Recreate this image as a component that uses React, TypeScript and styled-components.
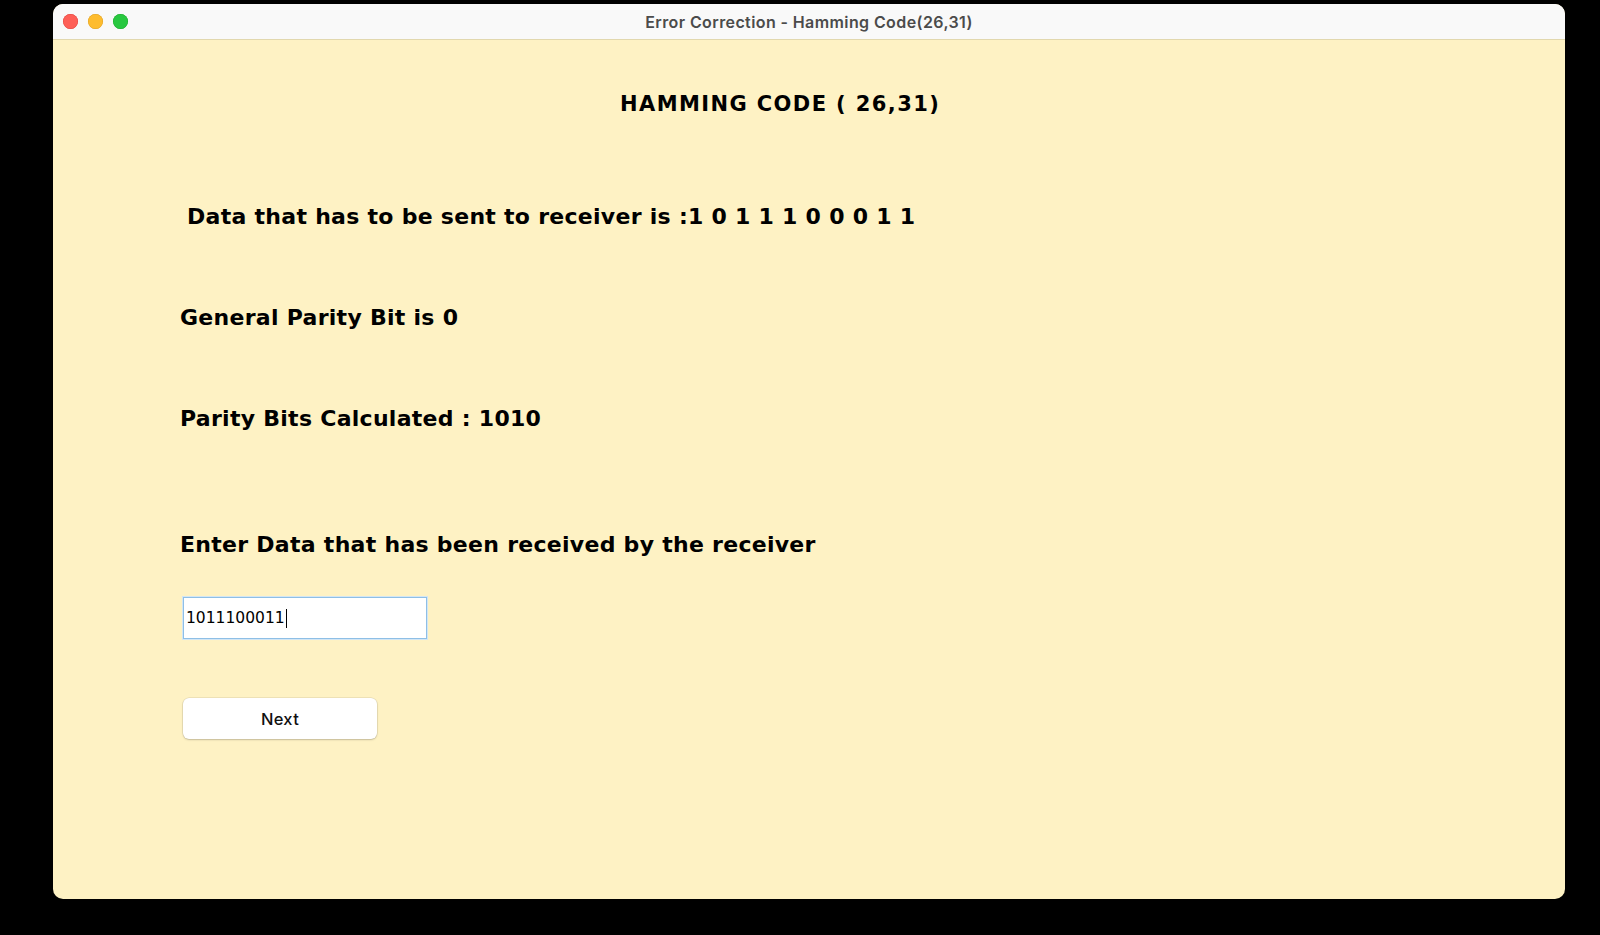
import React from "react";
import styled, { createGlobalStyle } from "styled-components";

const GlobalStyle = createGlobalStyle`
  html, body {
    margin: 0;
    padding: 0;
    background: #000;
  }
  body {
    width: 1600px;
    height: 935px;
    overflow: hidden;
  }
`;

const Desktop = styled.div`
  box-sizing: border-box;
  width: 1600px;
  height: 935px;
  padding: 4px 0 0 53px;
  background: #000;
`;

const Window = styled.div`
  width: 1512px;
  height: 895px;
  border-radius: 10px;
  overflow: hidden;
  display: flex;
  flex-direction: column;
  background: #fef2c4;
`;

const TitleBar = styled.div`
  position: relative;
  flex: 0 0 35px;
  display: flex;
  align-items: center;
  justify-content: center;
  background: #f9f9f9;
  border-bottom: 1px solid #e2d8ae;
`;

const Lights = styled.div`
  position: absolute;
  left: 10px;
  top: 10px;
  display: flex;
  gap: 10px;
`;

const Light = styled.span<{ $color: string; $edge: string }>`
  width: 15px;
  height: 15px;
  border-radius: 50%;
  background: ${(p) => p.$color};
  box-shadow: inset 0 0 0 0.5px ${(p) => p.$edge};
`;

const Title = styled.span`
  font-family: Inter, "Open Sans", sans-serif;
  font-weight: 600;
  font-size: 16px;
  color: #4b4b4b;
  letter-spacing: 0.4px;
`;

const Content = styled.div`
  flex: 1;
  display: flex;
  flex-direction: column;
  align-items: flex-start;
  padding: 49px 0 0 127px;
`;

const Line = styled.div<{ $top: number; $indent?: number; $heading?: boolean }>`
  margin-top: ${(p) => p.$top}px;
  margin-left: ${(p) => p.$indent ?? 0}px;
  height: 30px;
  line-height: 30px;
  white-space: pre;
  font-family: "DejaVu Sans", Verdana, sans-serif;
  font-weight: 700;
  font-size: ${(p) => (p.$heading ? 21 : 22)}px;
  letter-spacing: ${(p) => (p.$heading ? 1.4 : 0.28)}px;
  color: #000;
`;

const Field = styled.div`
  box-sizing: border-box;
  margin: 37px 0 0 3px;
  width: 244px;
  height: 42px;
  padding: 0 2px;
  display: flex;
  align-items: center;
  background: #fff;
  border: 1px solid #8ebfe6;
  box-shadow: 0 0 0 1px #d3e6f4;
  font-family: "DejaVu Sans", sans-serif;
  font-size: 15.5px;
  color: #000;
`;

const Caret = styled.span`
  display: inline-block;
  width: 1px;
  height: 19px;
  margin-left: 1px;
  background: #000;
`;

const Button = styled.button`
  margin: 59px 0 0 3px;
  width: 194px;
  height: 41px;
  border: none;
  border-radius: 6px;
  background: #fff;
  box-shadow: 0 0 0 0.5px rgba(0, 0, 0, 0.12), 0 1px 2px rgba(0, 0, 0, 0.18);
  font-family: Inter, "Liberation Sans", sans-serif;
  font-weight: 500;
  font-size: 16.5px;
  letter-spacing: 0.3px;
  color: #111;
  cursor: default;
`;

export default function App() {
  return (
    <>
      <GlobalStyle />
      <Desktop>
        <Window>
          <TitleBar>
            <Lights>
              <Light $color="#fe5f57" $edge="#e0443e" />
              <Light $color="#febc2e" $edge="#dea123" />
              <Light $color="#28c840" $edge="#1aab29" />
            </Lights>
            <Title>Error Correction - Hamming Code(26,31)</Title>
          </TitleBar>
          <Content>
            <Line $top={0} $indent={440} $heading>HAMMING CODE ( 26,31)</Line>
            <Line $top={83} $indent={7}>
              Data that has to be sent to receiver is :1 0 1 1 1 0 0 0 1 1
            </Line>
            <Line $top={71}>General Parity Bit is 0</Line>
            <Line $top={71}>Parity Bits Calculated : 1010</Line>
            <Line $top={96}>Enter Data that has been received by the receiver</Line>
            <Field>
              1011100011
              <Caret />
            </Field>
            <Button>Next</Button>
          </Content>
        </Window>
      </Desktop>
    </>
  );
}
